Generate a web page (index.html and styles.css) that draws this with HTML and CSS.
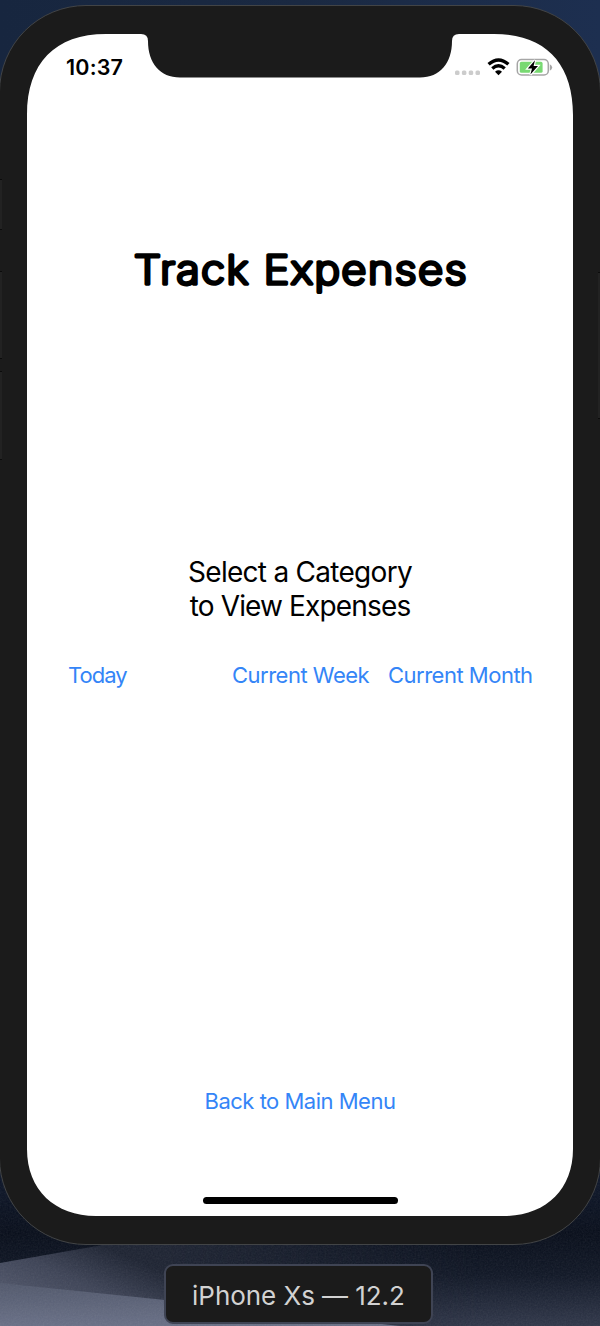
FILE: index.html
```html
<!DOCTYPE html>
<html lang="en">
<head>
<meta charset="utf-8">
<title>Track Expenses</title>
<link rel="stylesheet" href="styles.css">
</head>
<body>
<div class="desktop">
  <svg class="wallpaper" viewBox="0 0 600 1326" aria-hidden="true">
    <defs>
      <linearGradient id="sky" x1="0" x2="1" y1="0" y2="0"><stop offset="0" stop-color="#17263f"/><stop offset=".5" stop-color="#1a2942"/><stop offset="1" stop-color="#1d2f50"/></linearGradient>
      <linearGradient id="night" x1="0" x2="0" y1="0" y2="1"><stop offset="0" stop-color="#121e38"/><stop offset=".55" stop-color="#060c19"/><stop offset=".75" stop-color="#0e1524"/><stop offset="1" stop-color="#2f3649"/></linearGradient>
      <linearGradient id="dune" gradientUnits="userSpaceOnUse" x1="60" x2="90" y1="1310" y2="1240"><stop offset="0" stop-color="#4c5266"/><stop offset=".45" stop-color="#3c4255"/><stop offset="1" stop-color="#1c2231"/></linearGradient>
      <linearGradient id="fade" x1="0" x2="1" y1="0" y2="0"><stop offset=".35" stop-color="#fff"/><stop offset="1" stop-color="#000"/></linearGradient>
      <mask id="dune-edge"><rect y="1240" width="480" height="86" fill="url(#fade)"/></mask>
      <linearGradient id="sand" x1="0" x2="0" y1="0" y2="1"><stop offset="0" stop-color="#50576b"/><stop offset="1" stop-color="#686f86"/></linearGradient>
      <filter id="grain" x="0" y="0" width="100%" height="100%"><feTurbulence type="fractalNoise" baseFrequency=".6" numOctaves="2"/><feColorMatrix type="saturate" values="0"/></filter>
    </defs>
    <rect width="600" height="200" fill="url(#sky)"/>
    <rect y="1120" width="600" height="206" fill="url(#night)"/>
    <path d="M0 1263 108 1244H480V1326H0Z" fill="url(#dune)" mask="url(#dune-edge)"/>
    <path d="M0 1283 165 1300 300 1315 400 1326H0Z" fill="url(#sand)"/>
    <rect y="1120" width="600" height="206" filter="url(#grain)" opacity=".1"/>
  </svg>

  <div class="phone">
    <i class="side mute"></i><i class="side volume-up"></i><i class="side volume-down"></i><i class="side power"></i>
    <main class="screen">
      <svg class="glass" viewBox="0 0 546 1182" aria-hidden="true">
        <path fill="#fff" d="M64 0H114Q121 0 121 7C121 29 133 43.500 153 43.500H393C413 43.500 425 29 425 7Q425 0 432 0H467C518 0 546 29 546 81V1115C546 1156 518 1182 477 1182H69C28 1182 0 1156 0 1115V81C0 29 28 0 79 0Z"/>
      </svg>
      <header class="status">
        <time class="clock">10:37</time>
        <svg class="indicators" viewBox="0 0 98 20">
          <g fill="#ccc"><rect x="0" y="13.500" width="4.500" height="4.500" rx="1.500"/><rect x="6.900" y="13.500" width="4.500" height="4.500" rx="1.500"/><rect x="13.700" y="13.500" width="4.500" height="4.500" rx="1.500"/><rect x="20.500" y="13.500" width="4.500" height="4.500" rx="1.500"/></g>
          <path d="M33.600 7.300Q43.500-1.300 53.400 7.300M37.300 11.500Q43.500 6.200 49.700 11.500" fill="none" stroke="#000" stroke-width="3.400"/>
          <path d="M40 14.700Q43.500 12 47 14.700L43.500 18.200Z"/>
          <rect x="62.300" y="2.400" width="31" height="15.700" rx="4.300" fill="#fff" stroke="#a6a6a6" stroke-width="1.500"/>
          <rect x="64.800" y="4.800" width="22.800" height="11" rx="1.600" fill="#78d972"/>
          <path d="M94.800 7.300Q97.200 8.500 97.200 10.500T94.800 13.700Z" fill="#a6a6a6"/>
          <path d="M80 3.200 72.800 11.500H77L75.400 17.600 83 9H78.600Z" stroke="#fff" stroke-width="2.400" paint-order="stroke"/>
        </svg>
      </header>
      <h1 class="title"><svg class="title-art" viewBox="0 0 346 60"><text x="7" y="41.500" textLength="334" lengthAdjust="spacingAndGlyphs">Track Expenses</text></svg></h1>
      <p class="prompt"><span class="line-one">Select a Category</span><br><span class="line-two">to View Expenses</span></p>
      <nav class="periods">
        <a class="link today">Today</a>
        <a class="link week">Current Week</a>
        <a class="link month">Current Month</a>
      </nav>
      <a class="link back">Back to Main Menu</a>
      <div class="home-bar"></div>
    </main>
  </div>
  <div class="device-label">iPhone Xs — 12.2</div>
</div>
</body>
</html>
```
FILE: styles.css
```css
* { box-sizing: border-box; }
body { margin: 0; font-family: Inter, "Liberation Sans", sans-serif; }
.desktop { position: relative; width: 600px; height: 1326px; padding-top: 5px; overflow: hidden; background: #151e32; }
.wallpaper { position: absolute; inset: 0; width: 600px; height: 1326px; }
.phone { position: relative; width: 602px; height: 1240px; margin-left: -1px; padding: 28px 27px; border: 1px solid #424446; border-radius: 87px; background: #1b1b1b; }
.screen { position: relative; display: flex; flex-direction: column; align-items: center; width: 546px; height: 1182px; color: #000; }
.glass { position: absolute; inset: 0; width: 546px; height: 1182px; }
.screen > :not(.glass) { position: relative; }
.screen > .glass { position: absolute; }
.status { display: flex; justify-content: space-between; align-self: stretch; height: 66px; padding: 23px 20px 0 39px; }
.clock { font-size: 21.5px; line-height: 21px; font-weight: 600; letter-spacing: .2px; }
.indicators { width: 98px; height: 20px; }
.title { width: 346px; height: 60px; margin: 142px 0 0; }
.title-art { display: block; width: 346px; height: 60px; }
.title-art text { font-family: Inter, sans-serif; font-size: 39px; font-weight: 200; letter-spacing: 1.5px; fill: #000; stroke: #000; stroke-width: 3.6px; stroke-linejoin: round; stroke-linecap: round; }
.prompt { margin: 253px 0 0; font-size: 28px; line-height: 34px; text-align: center; white-space: nowrap; }
.line-one { letter-spacing: -.72px; }
.line-two { letter-spacing: -.85px; }
.link { color: #3485f7; font-size: 22px; line-height: 26px; letter-spacing: -.5px; white-space: nowrap; }
.periods { display: flex; align-self: stretch; margin-top: 39px; padding-left: 41px; }
.today { width: 164px; letter-spacing: -1px; }
.week { width: 156px; }
.back { margin-top: 400px; }
.home-bar { width: 195px; height: 7px; margin-top: 83px; border-radius: 4px; background: #000; }
.side { position: absolute; width: 2px; border: 1px solid #0b0b0b; border-width: 1px 0; background: #222; }
.mute { left: 0; top: 173px; height: 51px; }
.volume-up { left: 0; top: 265px; height: 88px; }
.volume-down { left: 0; top: 365px; height: 89px; }
.power { right: 0; top: 266px; height: 147px; }
.device-label { position: relative; width: 269px; height: 60px; margin: 19px 0 0 164px; border: 2px solid #3f4454; border-radius: 9px; background: #1b1b1b; color: #d2d2d2; font-size: 26px; line-height: 59px; text-align: center; letter-spacing: -.05px; }
```
